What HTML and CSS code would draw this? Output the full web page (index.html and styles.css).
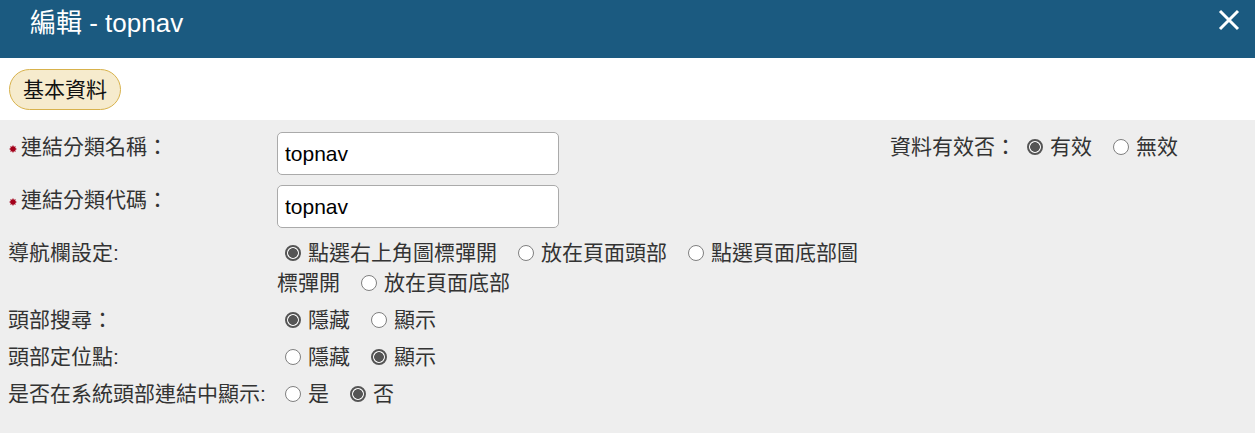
FILE: index.html
```html
<!DOCTYPE html>
<html lang="zh-Hant">
<head>
<meta charset="utf-8">
<title>編輯 - topnav</title>
<link rel="stylesheet" href="styles.css">
</head>
<body>
<header class="dlg-head">
  <h1 class="dlg-title">編輯 - topnav</h1>
  <button class="dlg-close" type="button" aria-label="關閉">
    <svg width="22" height="22" viewBox="0 0 22 22"><path d="M2 2 L20 20 M20 2 L2 20" stroke="#fff" stroke-width="3" fill="none"/></svg>
  </button>
</header>
<div class="tabbar"><span class="tab">基本資料</span></div>
<form class="form">
  <div class="lbl"><svg class="req" width="8" height="8" viewBox="0 0 8 8" aria-hidden="true"><polygon points="4,0 4.9,1.8 6.8,1.2 6.2,3.1 8,4 6.2,4.9 6.8,6.8 4.9,6.2 4,8 3.1,6.2 1.2,6.8 1.8,4.9 0,4 1.8,3.1 1.2,1.2 3.1,1.8" fill="#a3001a"/></svg>連結分類名稱：</div>
  <div class="fld"><input class="txt" type="text" value="topnav"></div>
  <div class="side"><span class="side-lbl">資料有效否：</span><label class="opt"><input type="radio" name="valid" checked>有效</label><label class="opt"><input type="radio" name="valid">無效</label></div>

  <div class="lbl"><svg class="req" width="8" height="8" viewBox="0 0 8 8" aria-hidden="true"><polygon points="4,0 4.9,1.8 6.8,1.2 6.2,3.1 8,4 6.2,4.9 6.8,6.8 4.9,6.2 4,8 3.1,6.2 1.2,6.8 1.8,4.9 0,4 1.8,3.1 1.2,1.2 3.1,1.8" fill="#a3001a"/></svg>連結分類代碼：</div>
  <div class="fld"><input class="txt" type="text" value="topnav"></div>

  <div class="lbl">導航欄設定:</div>
  <div class="fld"><label class="opt"><input type="radio" name="nav" checked>點選右上角圖標彈開</label><label class="opt"><input type="radio" name="nav">放在頁面頭部</label><label class="opt"><input type="radio" name="nav">點選頁面底部圖標彈開</label><label class="opt"><input type="radio" name="nav">放在頁面底部</label></div>

  <div class="lbl">頭部搜尋：</div>
  <div class="fld"><label class="opt"><input type="radio" name="search" checked>隱藏</label><label class="opt"><input type="radio" name="search">顯示</label></div>

  <div class="lbl">頭部定位點:</div>
  <div class="fld"><label class="opt"><input type="radio" name="anchor">隱藏</label><label class="opt"><input type="radio" name="anchor" checked>顯示</label></div>

  <div class="lbl">是否在系統頭部連結中顯示:</div>
  <div class="fld"><label class="opt"><input type="radio" name="show">是</label><label class="opt"><input type="radio" name="show" checked>否</label></div>
</form>
</body>
</html>
```
FILE: styles.css
```css
html, body {
  margin: 0;
  padding: 0;
}
body {
  background: #eeeeee;
  font-family: "Liberation Sans", "Noto Sans CJK TC", sans-serif;
  color: #333;
  height: 433px;
  overflow: hidden;
}
.dlg-head {
  height: 58px;
  box-sizing: border-box;
  background: #1b5a80;
  display: flex;
  justify-content: space-between;
  align-items: flex-start;
  padding: 0 15px 0 30px;
}
.dlg-title {
  margin: 0;
  font-weight: normal;
  font-size: 26px;
  line-height: 47px;
  color: #fff;
}
.dlg-close {
  background: none;
  border: 0;
  padding: 0;
  margin-top: 9px;
  width: 22px;
  height: 22px;
  cursor: pointer;
}
.dlg-close svg {
  display: block;
}
.tabbar {
  background: #fff;
  display: flex;
  padding: 11px 9px 10px;
}
.tab {
  font-size: 21px;
  line-height: 39px;
  padding: 0 13px;
  border: 1px solid #d8b24c;
  border-radius: 21px;
  background: #f6ebcd;
  color: #111;
}
.form {
  display: grid;
  grid-template-columns: 269px 593px 1fr;
  row-gap: 7px;
  padding: 12px 8px 0;
  font-size: 21px;
  line-height: 30px;
}
.lbl {
  grid-column: 1;
  white-space: nowrap;
}
.fld {
  grid-column: 2;
}
.side {
  grid-column: 3;
  padding-left: 20px;
  white-space: nowrap;
}
.side-lbl {
  margin-right: 3px;
}
.req {
  margin: 0 4px 0 1px;
  vertical-align: 1px;
}
.txt {
  display: block;
  width: 282px;
  height: 43px;
  box-sizing: border-box;
  border: 1px solid #aaa;
  border-radius: 5px;
  padding: 0 7px;
  margin: 0 0 3px;
  background: #fff;
  font: 21px "Liberation Sans", sans-serif;
  color: #000;
}
.opt {
  margin-right: 13px;
}
.opt input {
  -webkit-appearance: none;
  appearance: none;
  box-sizing: border-box;
  width: 16px;
  height: 16px;
  margin: 0 7px 0 8px;
  border: 1.6px solid #7f7f7f;
  border-radius: 50%;
  background: #fff;
  vertical-align: -1px;
}
.opt input:checked {
  border: 2px solid #555;
  background: radial-gradient(circle, #555 0 4.5px, #fff 5.2px);
}
```
